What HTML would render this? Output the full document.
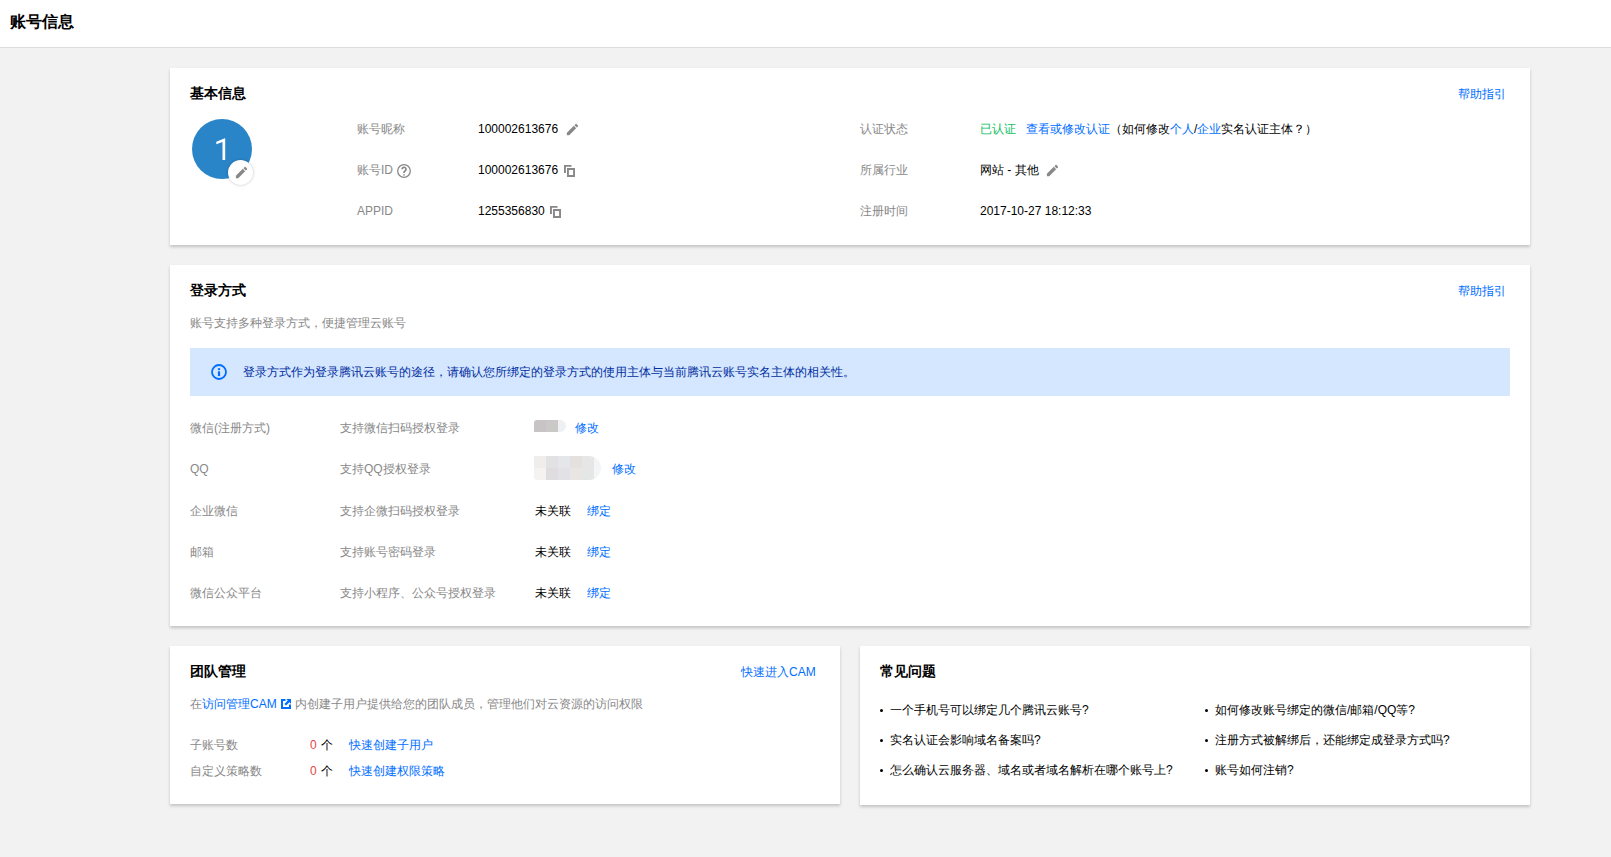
<!DOCTYPE html>
<html><head><meta charset="utf-8">
<style>
*{box-sizing:border-box;margin:0;padding:0}
html,body{width:1611px;height:857px;overflow:hidden;background:#f2f2f2;font-family:"Liberation Sans",sans-serif;font-size:12px;color:#000}
.hd{position:absolute;left:0;top:0;width:1611px;height:48px;background:#fff;border-bottom:1px solid #ddd}
.hd h1{position:absolute;left:10px;top:10.5px;font-size:16px;font-weight:bold;line-height:22px;color:#000}
.card{position:absolute;background:#fff;box-shadow:0 2px 3px 0 rgba(0,0,0,.2)}
.ttl{position:absolute;font-size:14px;font-weight:bold;line-height:20px;color:#000}
.a{color:#006eff;text-decoration:none}
.t{position:absolute;white-space:nowrap;line-height:18px;margin-top:1px}
.g{color:#888}
.k{color:#000}
.help{position:absolute;right:25px;top:84px}
.av{position:absolute;left:21.6px;top:50.6px;width:60.8px;height:60.8px;border-radius:50%;background:#2a85c8;color:#fff;font-size:30px;line-height:60px;text-align:center}
.ed{position:absolute;left:36.4px;top:41.4px;width:25px;height:25px;border-radius:50%;background:#fff;box-shadow:0 0 3px rgba(0,0,0,.25)}
.abs{position:absolute}
.bn{position:absolute;left:20px;top:83px;width:1320px;height:48px;background:#d5e7ff;color:#002da0}
.bn .bi{position:absolute;left:21px;top:16px}
.bn span{position:absolute;left:53px;top:15px;line-height:18px;white-space:nowrap}
.blur1,.blur2{position:absolute;display:flex;height:12px;border-radius:3px 6px 6px 0;overflow:hidden}
.blur2{height:24px;border-radius:0 12px 12px 3px;flex-direction:column}
.blur2 div{display:flex;height:12px}
.blur1 i,.blur2 i{display:block;width:12px;height:100%}
.ext{vertical-align:-1px;margin:0 1px}
.li{position:absolute;white-space:nowrap;line-height:18px;padding-left:10px;color:#000;margin-top:2px}
.li:before{content:"";position:absolute;left:0;top:7.5px;width:3px;height:3px;border-radius:50%;background:#000}
</style></head><body>
<div class="hd"><h1 style="width: 64px; text-align-last: justify;">账号信息</h1></div>

<!-- card 1 -->
<div class="card" style="left:170px;top:68px;width:1360px;height:177px">
  <div class="ttl" style="left: 20px; top: 15px; width: 56px; text-align-last: justify;">基本信息</div>
  <div class="t a" style="right: 24px; top: 16px; width: 48px; text-align-last: justify;">帮助指引</div>
  <div class="av"><svg style="position:absolute;left:0.4px;top:0.4px" width="60" height="60" viewBox="0 0 60 60"><path fill="#fff" d="M33.2 19.2V41h-2.7V22.9l-6.2 2.3v-2.4l8.6-3.6z"></path></svg><div class="ed"><svg style="position:absolute;left:6.3px;top:5.2px" width="15" height="15" viewBox="0 0 24 24"><path fill="#888" d="M3 17.25V21h3.75L17.81 9.94l-3.75-3.75L3 17.25zM20.71 7.04c.39-.39.39-1.02 0-1.41l-2.34-2.34c-.39-.39-1.02-.39-1.41 0l-1.83 1.83 3.75 3.75 1.83-1.83z"></path></svg></div></div>
  <div class="t g" style="left: 187px; top: 51px; width: 48px; text-align-last: justify;">账号昵称</div>
  <div class="t g" style="left: 187px; top: 92px; width: 36px; text-align-last: justify;">账号ID</div>
  <div class="t g" style="left:187px;top:133px">APPID</div>
  <div class="t k" style="left:308px;top:51px">100002613676</div>
  <div class="t k" style="left:308px;top:92px">100002613676</div>
  <div class="t k" style="left:308px;top:133px">1255356830</div>
  <svg class="abs" style="left:395px;top:54px" width="15" height="15" viewBox="0 0 24 24"><path fill="#888" d="M3 17.25V21h3.75L17.81 9.94l-3.75-3.75L3 17.25zM20.71 7.04c.39-.39.39-1.02 0-1.41l-2.34-2.34c-.39-.39-1.02-.39-1.41 0l-1.83 1.83 3.75 3.75 1.83-1.83z"></path></svg>
  <svg class="abs" style="left:875px;top:95px" width="15" height="15" viewBox="0 0 24 24"><path fill="#888" d="M3 17.25V21h3.75L17.81 9.94l-3.75-3.75L3 17.25zM20.71 7.04c.39-.39.39-1.02 0-1.41l-2.34-2.34c-.39-.39-1.02-.39-1.41 0l-1.83 1.83 3.75 3.75 1.83-1.83z"></path></svg>
  <svg class="abs" style="left:394px;top:97px" width="11" height="12" viewBox="0 0 11 12"><path fill="#888" fill-rule="evenodd" d="M0 0h7.5v1.8H1.9V8H0z M3 3h8v9H3z M4.9 4.9v5.2h4.2V4.9z"></path></svg>
  <svg class="abs" style="left:380px;top:138px" width="11" height="12" viewBox="0 0 11 12"><path fill="#888" fill-rule="evenodd" d="M0 0h7.5v1.8H1.9V8H0z M3 3h8v9H3z M4.9 4.9v5.2h4.2V4.9z"></path></svg>
  <svg class="abs" style="left:227px;top:96px" width="14" height="14" viewBox="0 0 14 14"><circle cx="7" cy="7" r="6.3" fill="none" stroke="#888" stroke-width="1.3"></circle><path d="M5 5.3a2 2 0 1 1 3 1.7c-.7.4-1 .8-1 1.6v.4" fill="none" stroke="#888" stroke-width="1.7"></path><rect x="6.15" y="10" width="1.7" height="1.7" fill="#aaa"></rect></svg>
  <div class="t g" style="left: 690px; top: 51px; width: 48px; text-align-last: justify;">认证状态</div>
  <div class="t g" style="left: 690px; top: 92px; width: 48px; text-align-last: justify;">所属行业</div>
  <div class="t g" style="left: 690px; top: 133px; width: 48px; text-align-last: justify;">注册时间</div>
  <div class="t k" style="left: 810px; top: 51px; width: 337.36px; text-align-last: justify;"><span style="color:#0abf5b">已认证</span>&nbsp;&nbsp;&nbsp;<span class="a">查看或修改认证</span>（如何修改<span class="a">个人</span>/<span class="a">企业</span>实名认证主体？）</div>
  <div class="t k" style="left: 810px; top: 92px; width: 58.68px; text-align-last: justify;">网站 - 其他</div>
  <div class="t k" style="left:810px;top:133px">2017-10-27 18:12:33</div>
</div>

<!-- card 2 -->
<div class="card" style="left:170px;top:265px;width:1360px;height:361px">
  <div class="ttl" style="left: 20px; top: 15px; width: 56px; text-align-last: justify;">登录方式</div>
  <div class="t a" style="right: 24px; top: 16px; width: 48px; text-align-last: justify;">帮助指引</div>
  <div class="t g" style="left: 20px; top: 48px; width: 216px; text-align-last: justify;">账号支持多种登录方式，便捷管理云账号</div>
  <div class="bn"><svg class="bi" width="16" height="16" viewBox="0 0 16 16"><circle cx="8" cy="8" r="7.0" fill="none" stroke="#006eff" stroke-width="1.8"></circle><rect x="6.9" y="4.2" width="2.2" height="1.9" fill="#006eff"></rect><rect x="6.9" y="7.3" width="2.2" height="4.8" fill="#006eff"></rect></svg><span style="width: 612px; text-align-last: justify;">登录方式作为登录腾讯云账号的途径，请确认您所绑定的登录方式的使用主体与当前腾讯云账号实名主体的相关性。</span></div>
  <div class="t g" style="left: 20px; top: 153px; width: 80px; text-align-last: justify;">微信(注册方式)</div>
  <div class="t g" style="left: 170px; top: 153px; width: 120px; text-align-last: justify;">支持微信扫码授权登录</div>
  <div class="t g" style="left:20px;top:194px">QQ</div>
  <div class="t g" style="left: 170px; top: 194px; width: 90.68px; text-align-last: justify;">支持QQ授权登录</div>
  <div class="t g" style="left: 20px; top: 236px; width: 48px; text-align-last: justify;">企业微信</div>
  <div class="t g" style="left: 170px; top: 236px; width: 120px; text-align-last: justify;">支持企微扫码授权登录</div>
  <div class="t g" style="left: 20px; top: 277px; width: 24px; text-align-last: justify;">邮箱</div>
  <div class="t g" style="left: 170px; top: 277px; width: 96px; text-align-last: justify;">支持账号密码登录</div>
  <div class="t g" style="left: 20px; top: 318px; width: 72px; text-align-last: justify;">微信公众平台</div>
  <div class="t g" style="left: 170px; top: 318px; width: 156px; text-align-last: justify;">支持小程序、公众号授权登录</div>
  <div class="blur1" style="left:364px;top:155px"><i style="background:#c8c4c6"></i><i style="background:#cbc8c8"></i><i style="background:#eef0f4;width:8px"></i></div>
  <div class="t a" style="left: 405px; top: 153px; width: 24px; text-align-last: justify;">修改</div>
  <div class="blur2" style="left:364px;top:191px"><div><i style="background:#f0eded"></i><i style="background:#e2e1e3"></i><i style="background:#e5e6ea"></i><i style="background:#e4e1e0"></i><i style="background:#e6e6e6"></i><i style="background:#f3f4f6;width:7px"></i></div><div><i style="background:#f4f3f2"></i><i style="background:#dfdde0"></i><i style="background:#e2e2e6"></i><i style="background:#e9e5e3"></i><i style="background:#e5e6e6"></i><i style="background:#f4f5f7;width:7px"></i></div></div>
  <div class="t a" style="left: 442px; top: 194px; width: 24px; text-align-last: justify;">修改</div>
  <div class="t k" style="left: 365px; top: 236px; width: 76px; text-align-last: justify;">未关联<span class="a" style="margin-left:16px">绑定</span></div>
  <div class="t k" style="left: 365px; top: 277px; width: 76px; text-align-last: justify;">未关联<span class="a" style="margin-left:16px">绑定</span></div>
  <div class="t k" style="left: 365px; top: 318px; width: 76px; text-align-last: justify;">未关联<span class="a" style="margin-left:16px">绑定</span></div>
</div>

<!-- card 3 -->
<div class="card" style="left:170px;top:646px;width:670px;height:158px">
  <div class="ttl" style="left: 20px; top: 15px; width: 56px; text-align-last: justify;">团队管理</div>
  <div class="t a" style="left: 571px; top: 16px; width: 74.68px; text-align-last: justify;">快速进入CAM</div>
  <div class="t g" style="left: 20px; top: 48px; width: 86.68px; text-align-last: justify;">在<span class="a">访问管理CAM</span></div>
  <svg class="abs" style="left:111px;top:53px" width="10" height="10" viewBox="0 0 10 10"><path fill="none" stroke="#006eff" stroke-width="2" d="M4.5 1H1v8h8V5.5"></path><path fill="#006eff" d="M5.2 0H10v4.8L8.4 3.2 5 6.6 3.4 5 6.8 1.6z"></path></svg>
  <div class="t g" style="left: 125px; top: 48px; width: 348px; text-align-last: justify;">内创建子用户提供给您的团队成员，管理他们对云资源的访问权限</div>
  <div class="t g" style="left: 20px; top: 89px; width: 48px; text-align-last: justify;">子账号数</div>
  <div class="t k" style="left: 140px; top: 89px; width: 23.19px; text-align-last: justify;"><span style="color:#e54545">0</span><span style="margin-left:4.5px">个</span></div>
  <div class="t a" style="left: 179px; top: 89px; width: 84px; text-align-last: justify;">快速创建子用户</div>
  <div class="t g" style="left: 20px; top: 115px; width: 72px; text-align-last: justify;">自定义策略数</div>
  <div class="t k" style="left: 140px; top: 115px; width: 23.19px; text-align-last: justify;"><span style="color:#e54545">0</span><span style="margin-left:4.5px">个</span></div>
  <div class="t a" style="left: 179px; top: 115px; width: 96px; text-align-last: justify;">快速创建权限策略</div>
</div>

<!-- card 4 -->
<div class="card" style="left:860px;top:646px;width:670px;height:159px">
  <div class="ttl" style="left: 20px; top: 15px; width: 56px; text-align-last: justify;">常见问题</div>
  <div class="li" style="left: 20px; top: 53px; width: 208.69px; text-align-last: justify;">一个手机号可以绑定几个腾讯云账号?</div>
  <div class="li" style="left: 345px; top: 53px; width: 210.02px; text-align-last: justify;">如何修改账号绑定的微信/邮箱/QQ等?</div>
  <div class="li" style="left: 20px; top: 83px; width: 160.69px; text-align-last: justify;">实名认证会影响域名备案吗?</div>
  <div class="li" style="left: 345px; top: 83px; width: 244.69px; text-align-last: justify;">注册方式被解绑后，还能绑定成登录方式吗?</div>
  <div class="li" style="left: 20px; top: 113px; width: 292.69px; text-align-last: justify;">怎么确认云服务器、域名或者域名解析在哪个账号上?</div>
  <div class="li" style="left: 345px; top: 113px; width: 88.69px; text-align-last: justify;">账号如何注销?</div>
</div>

</body></html>
